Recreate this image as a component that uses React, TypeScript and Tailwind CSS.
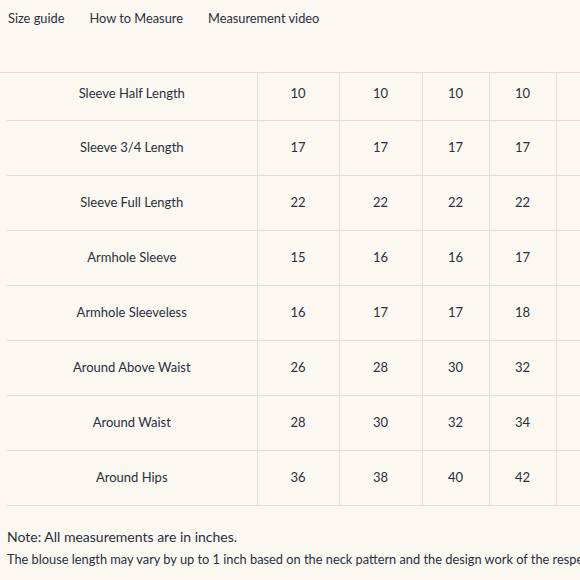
import React from "react";

const rows: [string, number[]][] = [
  ["Sleeve Half Length", [10, 10, 10, 10, 10]],
  ["Sleeve 3/4 Length", [17, 17, 17, 17, 17]],
  ["Sleeve Full Length", [22, 22, 22, 22, 22]],
  ["Armhole Sleeve", [15, 16, 16, 17, 17]],
  ["Armhole Sleeveless", [16, 17, 17, 18, 18]],
  ["Around Above Waist", [26, 28, 30, 32, 34]],
  ["Around Waist", [28, 30, 32, 34, 36]],
  ["Around Hips", [36, 38, 40, 42, 44]],
];

const widths = [82, 83, 67, 67, 67];

export default function App() {
  return (
    <div
      className="w-[580px] h-[580px] overflow-hidden bg-[#fbf7f1] text-[#28303d]"
      style={{ fontFamily: "Lato, 'Open Sans', sans-serif" }}
    >
      <div className="flex gap-[25px] pl-2 pt-[9px] h-[72px] text-[12.8px]">
        <span>Size guide</span>
        <span>How to Measure</span>
        <span>Measurement video</span>
      </div>
      <div className="border-t border-[#e2ddd6] pl-[7px]">
        <table className="border-collapse table-fixed w-[616px] text-[13px]">
          <colgroup>
            <col className="w-[250px]" />
            {widths.map((w, i) => (
              <col key={i} style={{ width: w }} />
            ))}
          </colgroup>
          <tbody>
            {rows.map(([label, vals], ri) => (
              <tr
                key={label}
                className={`border-b border-[#e2ddd6] ${ri === 0 ? "h-[47px]" : "h-[55px]"}`}
              >
                <td className={`text-center p-0 ${ri === 0 ? "pb-[6px]" : ""}`}>{label}</td>
                {vals.map((v, i) => (
                  <td
                    key={i}
                    className={`text-center p-0 border-l border-[#e2ddd6] ${ri === 0 ? "pb-[6px]" : ""}`}
                  >
                    {v}
                  </td>
                ))}
              </tr>
            ))}
          </tbody>
        </table>
        <div className="mt-[20px] leading-[22px] whitespace-nowrap">
          <div className="text-[14px]">Note: All measurements are in inches.</div>
          <div className="text-[12.8px]">
            The blouse length may vary by up to 1 inch based on the neck pattern and the design work of the respective blouse.
          </div>
        </div>
      </div>
    </div>
  );
}
